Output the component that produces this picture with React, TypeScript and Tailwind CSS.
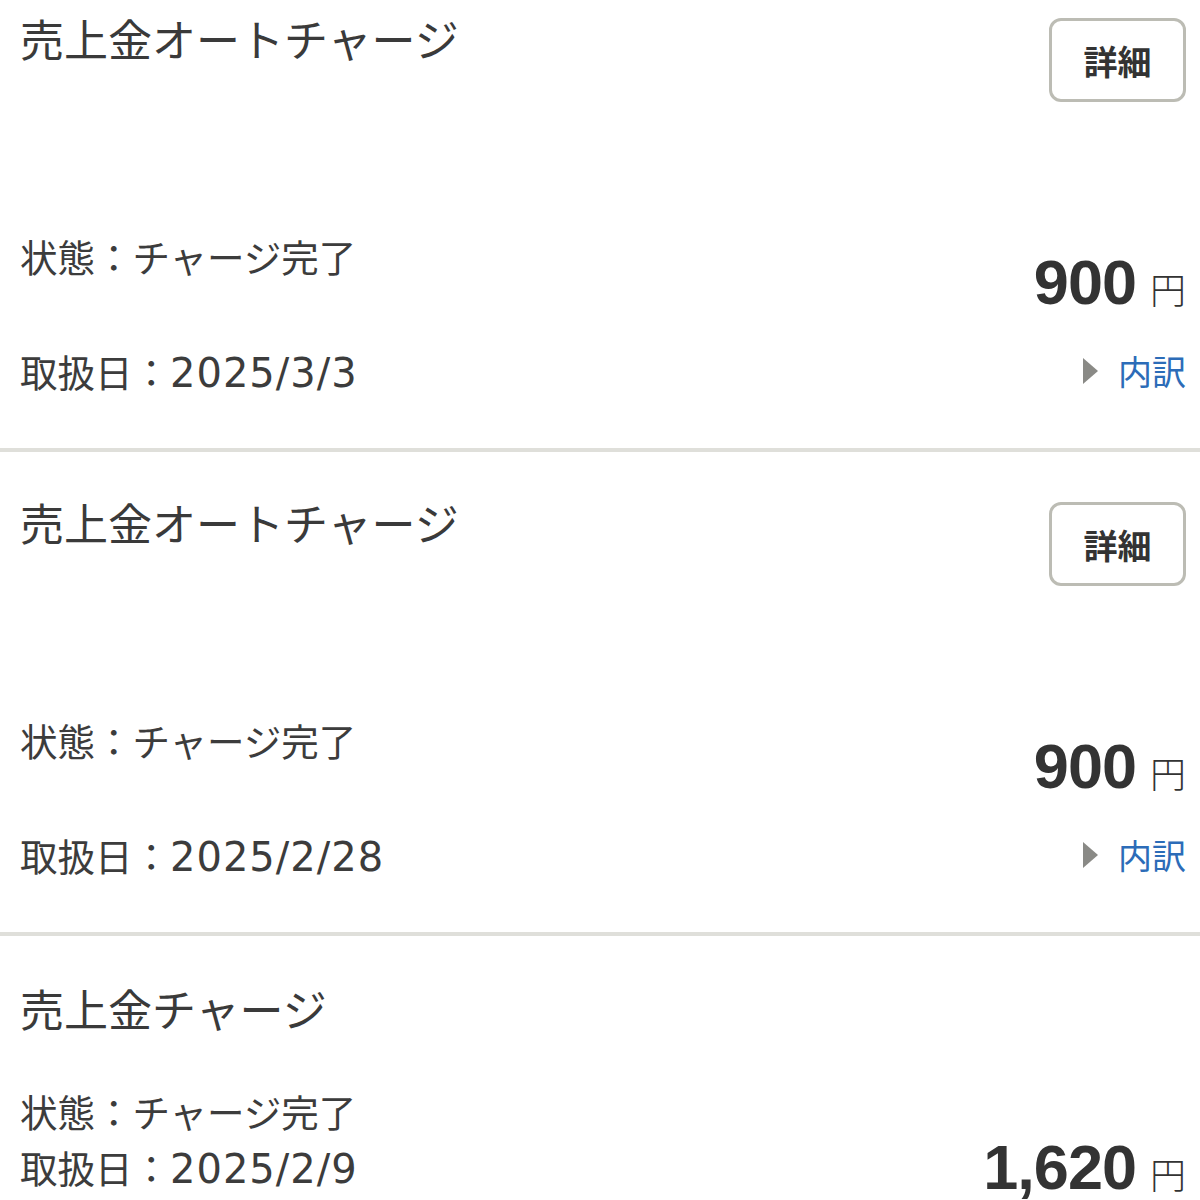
import { Fragment } from 'react'

type Entry = {
  title: string
  status: string
  date: string
  amount: string
  hasDetail: boolean
}

const ENTRIES: Entry[] = [
  { title: '売上金オートチャージ', status: 'チャージ完了', date: '2025/3/3', amount: '900', hasDetail: true },
  { title: '売上金オートチャージ', status: 'チャージ完了', date: '2025/2/28', amount: '900', hasDetail: true },
  { title: '売上金チャージ', status: 'チャージ完了', date: '2025/2/9', amount: '1,620', hasDetail: false },
]

const JP = "font-['Noto_Sans_CJK_JP','Noto_Sans',sans-serif]"
const LINE = `${JP} text-[37.5px] leading-[48px] font-normal text-[#3c3c3c]`

function Amount({ value }: { value: string }) {
  return (
    <div className="flex items-baseline gap-[14px] text-[#333333]">
      <span className="font-['Liberation_Sans','Noto_Sans_CJK_JP',sans-serif] text-[63px] leading-[60px] font-bold tracking-[-1px]">
        {value}
      </span>
      <span className={`${JP} text-[36px] leading-[36px] font-light`}>円</span>
    </div>
  )
}

function DateLine({ date }: { date: string }) {
  return (
    <p className={`${LINE} h-[48px]`}>
      取扱日：
      <span className="font-['DejaVu_Sans','Noto_Sans_CJK_JP',sans-serif] text-[40px] leading-[48px] tracking-[1px]">{date}</span>
    </p>
  )
}

function HistoryCard({ entry, first }: { entry: Entry; first: boolean }) {
  return (
    <div
      className={`border-b-4 border-[#dfdfda] pl-[20px] pr-[14px] ${first ? 'mt-[-32px]' : ''} ${
        entry.hasDetail ? 'pt-[50px] pb-[53px]' : 'pt-[52px] pb-[60px]'
      }`}
    >
      {/* title + detail button */}
      <div className="flex items-start justify-between">
        <h2 className={`${JP} mt-[-4px] text-[44px] leading-[48px] font-normal text-[#3a3a3a]`}>{entry.title}</h2>
        {entry.hasDetail && (
          <button
            type="button"
            className={`${JP} flex h-[84px] w-[137px] items-center justify-center rounded-[12px] border-[3px] border-[#bcbcb4] bg-white text-[34px] font-bold text-[#333333]`}
          >
            詳細
          </button>
        )}
      </div>

      {entry.hasDetail ? (
        <>
          <div className="mt-[130px] flex items-start justify-between">
            <p className={LINE}>状態：{entry.status}</p>
            <div className="mt-[20px]">
              <Amount value={entry.amount} />
            </div>
          </div>
          <div className="mt-[35px] flex items-center justify-between">
            <DateLine date={entry.date} />
            <div className="flex items-center gap-[20px]">
              <svg width="15" height="26" viewBox="0 0 15 26" aria-hidden="true">
                <path d="M0 0 L15 13 L0 26 Z" fill="#8a8a86" />
              </svg>
              <span className={`${JP} text-[34px] leading-[48px] font-normal text-[#2c6cb8]`}>内訳</span>
            </div>
          </div>
        </>
      ) : (
        <Fragment>
          <p className={`${LINE} mt-[55px]`}>状態：{entry.status}</p>
          <div className="mt-[8px] flex h-[48px] items-center justify-between">
            <DateLine date={entry.date} />
            <Amount value={entry.amount} />
          </div>
        </Fragment>
      )}
    </div>
  )
}

export default function App() {
  return (
    <div className="h-[1200px] w-[1200px] overflow-hidden bg-white">
      {ENTRIES.map((entry, i) => (
        <HistoryCard key={i} entry={entry} first={i === 0} />
      ))}
    </div>
  )
}
